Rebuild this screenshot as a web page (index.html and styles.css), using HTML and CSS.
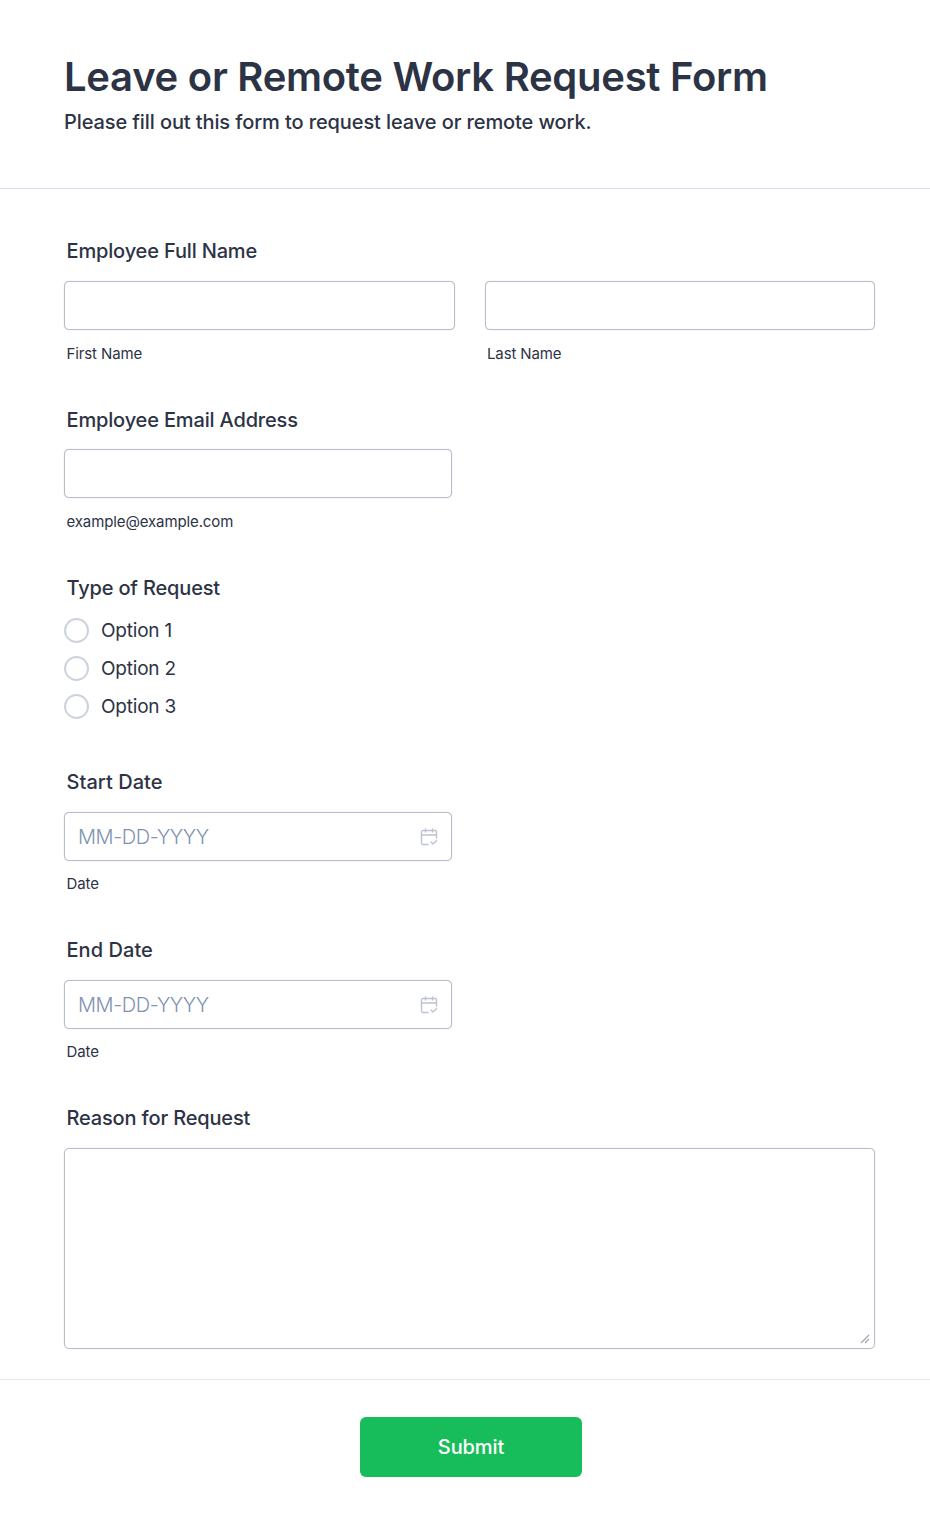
FILE: index.html
```html
<!DOCTYPE html>
<html lang="en">
<head>
    <meta charset="UTF-8">
    <meta name="viewport" content="width=device-width, initial-scale=1.0">
    <title>Leave or Remote Work Request Form</title>
    <link rel="stylesheet" href="styles.css">
</head>
<body>
    <form class="form">
        <header class="form-header">
            <h1>Leave or Remote Work Request Form</h1>
            <p>Please fill out this form to request leave or remote work.</p>
        </header>

        <div class="form-body">
            <div class="field field-name">
                <div class="label">Employee Full Name</div>
                <div class="name-grid">
                    <div>
                        <div class="input"></div>
                        <div class="hint">First Name</div>
                    </div>
                    <div>
                        <div class="input"></div>
                        <div class="hint">Last Name</div>
                    </div>
                </div>
            </div>

            <div class="field">
                <div class="label label-email">Employee Email Address</div>
                <div class="input input-half"></div>
                <div class="hint">example@example.com</div>
            </div>

            <div class="field field-radio">
                <div class="label label-radio">Type of Request</div>
                <div class="radio-row"><span class="radio"></span>Option 1</div>
                <div class="radio-row"><span class="radio"></span>Option 2</div>
                <div class="radio-row"><span class="radio"></span>Option 3</div>
            </div>

            <div class="field">
                <div class="label label-date">Start Date</div>
                <div class="input input-half input-date">
                    <span>MM-DD-YYYY</span>
                    <svg class="cal" viewBox="0 0 18 18" width="18" height="18" fill="none" stroke="#bcc3d2" stroke-width="1.4" stroke-linecap="round" stroke-linejoin="round">
                        <path d="M8 16.5H3A1.5 1.5 0 0 1 1.5 15V4A1.5 1.5 0 0 1 3 2.5H15A1.5 1.5 0 0 1 16.5 4V10"/>
                        <path d="M1.5 7H16.5M5.5 1V4M12.5 1V4"/>
                        <path d="M11 14L13 16L16.5 12.5"/>
                    </svg>
                </div>
                <div class="hint hint-date">Date</div>
            </div>

            <div class="field">
                <div class="label label-date">End Date</div>
                <div class="input input-half input-date">
                    <span>MM-DD-YYYY</span>
                    <svg class="cal" viewBox="0 0 18 18" width="18" height="18" fill="none" stroke="#bcc3d2" stroke-width="1.4" stroke-linecap="round" stroke-linejoin="round">
                        <path d="M8 16.5H3A1.5 1.5 0 0 1 1.5 15V4A1.5 1.5 0 0 1 3 2.5H15A1.5 1.5 0 0 1 16.5 4V10"/>
                        <path d="M1.5 7H16.5M5.5 1V4M12.5 1V4"/>
                        <path d="M11 14L13 16L16.5 12.5"/>
                    </svg>
                </div>
                <div class="hint hint-date">Date</div>
            </div>

            <div class="field field-last">
                <div class="label">Reason for Request</div>
                <div class="textarea">
                    <svg class="grip" viewBox="0 0 10 10" width="10" height="10" fill="none" stroke="#a5a5a5" stroke-width="1.2">
                        <path d="M1 9L9 1M5 9L9 5"/>
                    </svg>
                </div>
            </div>
        </div>

        <footer class="form-footer">
            <button class="submit" type="button">Submit</button>
        </footer>
    </form>
</body>
</html>
```

FILE: styles.css
```css
* {
    box-sizing: border-box;
}
body {
    margin: 0;
    background: #fff;
    font-family: Inter, sans-serif;
    color: #2c3345;
}
.form {
    width: 930px;
}
.form-header {
    height: 189px;
    padding: 52px 64px 0;
    border-bottom: 1px solid #d8dae9;
}
.form-header h1 {
    margin: 0;
    font-size: 40px;
    line-height: 50px;
    font-weight: 600;
    letter-spacing: -0.27px;
}
.form-header p {
    margin: 8px 0 0;
    font-size: 20px;
    line-height: 24px;
    font-weight: 500;
    letter-spacing: -0.1px;
}
.form-body {
    padding: 0 55px 30px 64px;
    border-bottom: 1px solid #e6e8f0;
}
.field {
    padding-top: 50px;
    height: 168px;
}
.field-name {
    height: 169px;
}
.field-radio {
    height: 194px;
}
.field-last {
    height: auto;
}
.label {
    padding-left: 2.5px;
    font-size: 20px;
    line-height: 24px;
    font-weight: 500;
    letter-spacing: -0.16px;
    margin-bottom: 18px;
}
.label-email {
    margin-bottom: 17px;
}
.label-radio {
    margin-bottom: 11px;
}
.label-date {
    letter-spacing: 0.05px;
}
.input {
    height: 49px;
    background: #fff;
    border: 1px solid #b8bdc9;
    border-radius: 5px;
    box-shadow: 0 0 1px #b8bdc9;
}
.input-half {
    width: 388px;
}
.input-date {
    display: flex;
    align-items: center;
    justify-content: space-between;
    padding: 0 13px;
    font-size: 20px;
    font-weight: 300;
    letter-spacing: -0.4px;
    color: #8092b0;
}
.hint {
    margin-top: 15px;
    padding-left: 2.5px;
    font-size: 15px;
    line-height: 18px;
    letter-spacing: -0.12px;
}
.hint-date {
    margin-top: 14px;
}
.name-grid {
    display: grid;
    grid-template-columns: 1fr 1fr;
    gap: 30px;
}
.radio-row {
    display: flex;
    align-items: center;
    gap: 12px;
    height: 38px;
    font-size: 19px;
    letter-spacing: -0.2px;
}
.radio {
    width: 25px;
    height: 25px;
    border: 2px solid #cdd2df;
    border-radius: 50%;
    background: #fff;
}
.textarea {
    position: relative;
    height: 201px;
    border: 1px solid #b8bdc9;
    border-radius: 5px;
    box-shadow: 0 0 1px #b8bdc9;
}
.grip {
    position: absolute;
    right: 4px;
    bottom: 4px;
}
.form-footer {
    display: flex;
    justify-content: center;
    padding: 37px 0 49px;
}
.submit {
    width: 222px;
    height: 60px;
    margin-left: 12px;
    border: 0;
    border-radius: 6px;
    background: #18bd5b;
    color: #fff;
    font-family: inherit;
    font-size: 20px;
    font-weight: 500;
    letter-spacing: -0.1px;
}
```
